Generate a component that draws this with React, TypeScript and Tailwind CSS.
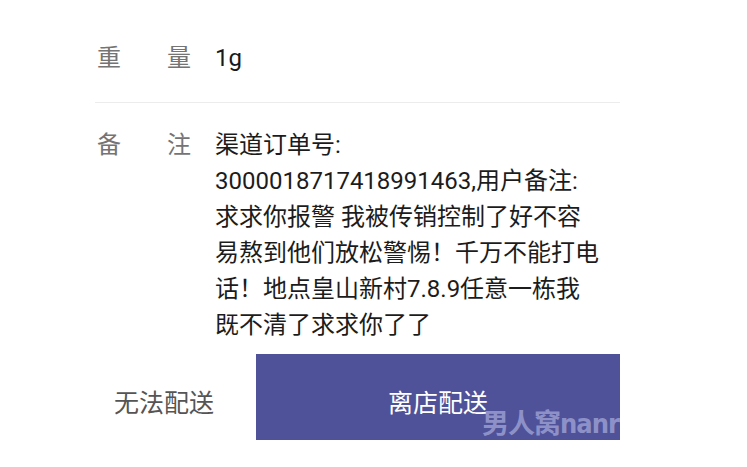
export default function App() {
  const lines = [
    "渠道订单号:",
    "3000018717418991463,用户备注:",
    "求求你报警 我被传销控制了好不容",
    "易熬到他们放松警惕！千万不能打电",
    "话！地点皇山新村7.8.9任意一栋我",
    "既不清了求求你了了",
  ];

  return (
    <div className="w-[747px] h-[467px] overflow-hidden bg-white font-['Roboto','Noto_Sans_CJK_SC',sans-serif]">
      <div className="ml-[95px] w-[525px]">
        {/* weight */}
        <div className="flex pt-[40px] h-[102px] text-[24px] leading-[36px]">
          <div className="w-[120px] pl-[2px] pr-[24px] flex justify-between text-[#747474]">
            <span>重</span>
            <span>量</span>
          </div>
          <span className="text-[#1a1a1a]">1g</span>
        </div>
        <div className="h-px bg-[#ececec]" />

        {/* remarks */}
        <div className="flex pt-[24px] text-[24px] leading-[36px]">
          <div className="w-[120px] pl-[2px] pr-[24px] flex justify-between items-start text-[#747474]">
            <span>备</span>
            <span>注</span>
          </div>
          <div className="flex flex-col text-[#1c1c1c]">
            {lines.map((l) => (
              <span key={l} className="whitespace-nowrap">
                {l}
              </span>
            ))}
          </div>
        </div>
      </div>

      {/* actions */}
      <div className="flex mt-[11px] ml-[95px] w-[525px] h-[86px]">
        <button className="w-[161px] pl-[19px] pt-[14px] text-left text-[25px] text-[#555]">
          无法配送
        </button>
        <button className="relative flex-1 overflow-hidden bg-[#4f5299] pt-[14px] text-[25px] text-white">
          离店配送
          <span className="absolute left-[226px] top-[55px] whitespace-nowrap font-['DejaVu_Sans_Condensed','Noto_Sans_CJK_SC',sans-serif] text-[27px] font-bold leading-[30px] tracking-[-1px] text-[#8e91c8]">
            男人窝nanr
          </span>
        </button>
      </div>
    </div>
  );
}
